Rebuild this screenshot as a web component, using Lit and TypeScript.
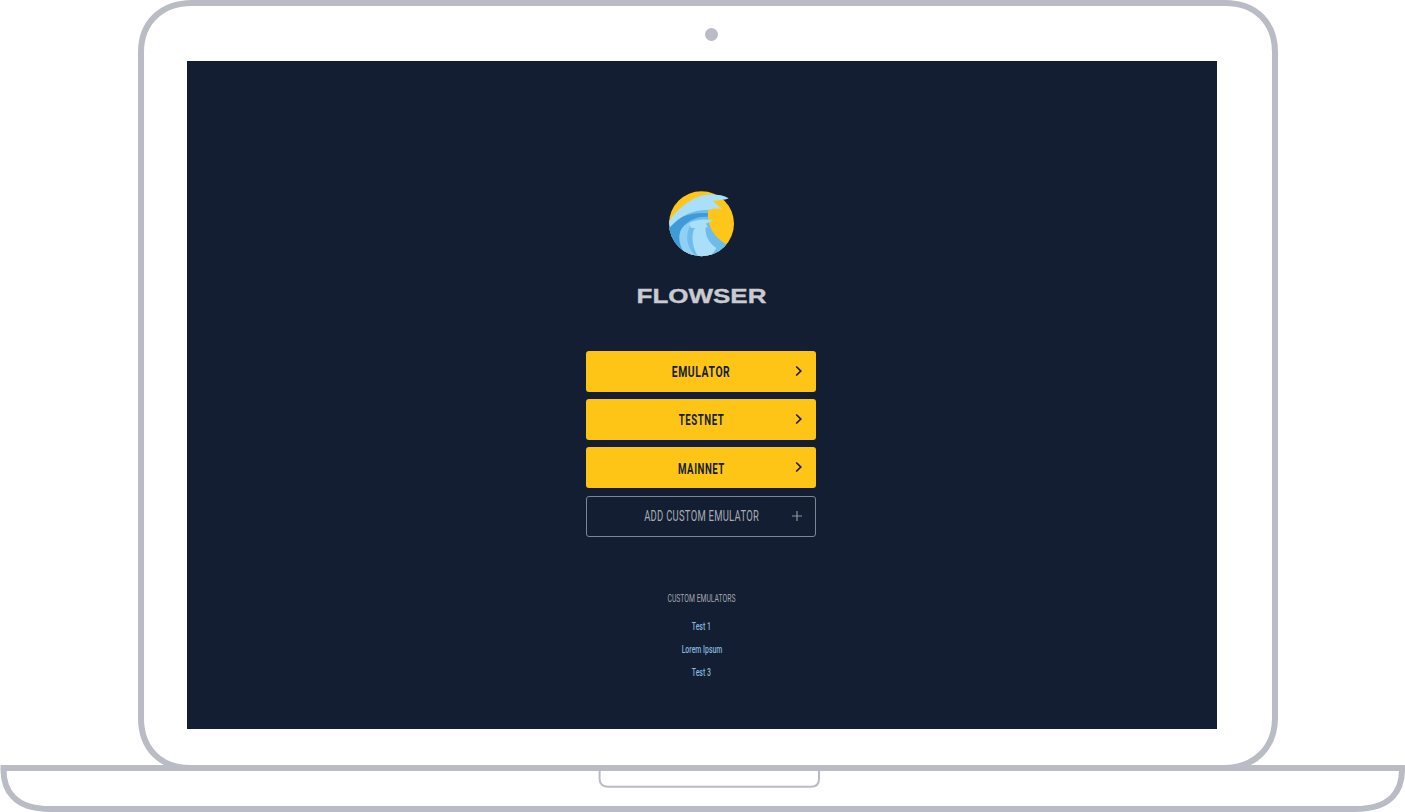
import { LitElement, html, css, svg } from "lit";
import { customElement } from "lit/decorators.js";

const FRAME = "#b9bcc4";

const frame = svg`
  <path d="M190 768 C160 768 141 748 141 718 V52 C141 22 162 3 192 3 H1225 C1255 3 1275 22 1275 52 V718 C1275 748 1254 768 1224 768" fill="none" stroke="${FRAME}" stroke-width="6"/>
  <path d="M3.5 768 H1402 C1402.5 790 1392 809 1355 809 H50 C14 809 3 790 3.5 768 Z" fill="#fff" stroke="${FRAME}" stroke-width="6"/>
  <path d="M599.6 771 V779 C599.6 784 603 786.7 608 786.7 H811 C816 786.7 819 784 819 779 V771" fill="none" stroke="${FRAME}" stroke-width="2"/>
  <circle cx="711.5" cy="34.5" r="6.5" fill="${FRAME}"/>
`;

const logo = svg`
  <svg class="logo" viewBox="0 0 240 228" width="80" height="76" aria-label="Flowser logo">
    <defs><clipPath id="disc"><circle cx="121.5" cy="113" r="97.5"/></clipPath></defs>
    <circle cx="121.5" cy="113" r="97.5" fill="#ffc61a"/>
    <g clip-path="url(#disc)">
      <path d="M20 130 C40 75 85 45 125 30 L142 70 C136 112 152 150 200 178 L200 228 L0 228 Z" fill="#6fbcec"/>
      <path d="M20 122 C50 92 95 78 141 82 L140 93 C108 90 78 105 62 128 C50 148 52 175 68 198 L20 190 Z" fill="#3f9ad8"/>
      <path d="M62 128 C72 115 85 108 98 104 C80 125 74 150 82 176 C88 193 98 205 110 214 L74 205 C56 182 50 150 62 128 Z" fill="#8fd0f4"/>
      <path d="M100 128 C110 122 125 122 134 122 C132 145 140 168 166 186 C160 198 152 206 142 214 L112 214 C94 185 90 150 100 128 Z" fill="#a9dff9"/>
    </g>
    <path d="M24 106 C44 72 85 42 112 32 C135 24 178 22 203 37 C190 44 172 42 155 45 L183 68 C165 66 150 68 140 72 C105 70 60 85 27 124 Z" fill="#a9dff9"/>
    <path d="M84 112 C100 100 130 98 157 102 L135 113 L141 124 C120 122 100 128 90 125 Z" fill="#a9dff9"/>
  </svg>
`;

const chevron = svg`<svg class="icon" viewBox="0 0 14 14" width="14" height="14"><path d="M4.2 2.5 L8.8 7 L4.2 11.5" fill="none" stroke="#131e33" stroke-width="1.7"/></svg>`;
const plus = svg`<svg class="icon plus" viewBox="0 0 14 14" width="14" height="14"><path d="M7 2 V12 M2 7 H12" fill="none" stroke="#8d939e" stroke-width="1.2"/></svg>`;

@customElement("app-root")
export class AppRoot extends LitElement {
  static styles = css`
    :host {
      display: block;
      width: 1405px;
      height: 812px;
      background: #fff;
      font-family: Roboto, "Liberation Sans", sans-serif;
      overflow: hidden;
    }
    .device {
      position: relative;
      box-sizing: border-box;
      width: 1405px;
      height: 812px;
      padding: 61px 188px 83px 187px;
    }
    .frame {
      position: absolute;
      inset: 0;
      width: 1405px;
      height: 812px;
    }
    .screen {
      position: relative;
      box-sizing: border-box;
      height: 668px;
      background: #131e33;
      display: flex;
      flex-direction: column;
      align-items: center;
      padding-top: 130px;
      padding-right: 2px;
    }
    .logo { display: block; margin: -5px 1px 0 0; }
    .brand {
      margin: 23px 0 0;
      font: 700 20px/22px "Liberation Sans", Arial, sans-serif;
      color: #c9cbd0;
      transform: translateX(0.5px) scaleX(1.3);
      -webkit-text-stroke: 0.35px #c9cbd0;
    }
    .buttons {
      margin-top: 43.5px;
      width: 230px;
      display: flex;
      flex-direction: column;
      gap: 7.4px;
    }
    .btn {
      position: relative;
      box-sizing: border-box;
      height: 41px;
      border-radius: 3px;
      display: flex;
      align-items: center;
      justify-content: center;
      background: #ffc516;
      color: #131e33;
    }
    .btn span {
      font-weight: 700;
      font-size: 14px;
      letter-spacing: 0.8px;
      transform: translate(0.5px, 1px) scaleX(0.74);
    }
    .btn span.narrow {
      transform: translate(0.5px, 1px) scaleX(0.69);
    }
    .btn.outline {
      background: transparent;
      border: 1px solid #7e8694;
      color: #a9adb5;
    }
    .btn.outline span {
      font-weight: 400;
      letter-spacing: 0.4px;
      transform: translateX(0.5px) scaleX(0.675);
      white-space: nowrap;
    }
    .icon {
      position: absolute;
      right: 10px;
      top: 13px;
    }
    .icon.plus {
      right: 11px;
      top: 12.5px;
    }
    .custom {
      margin-top: 56px;
      display: flex;
      flex-direction: column;
      align-items: center;
    }
    .custom h2 {
      margin: 0 0 16.5px;
      font-weight: 400;
      font-size: 10px;
      line-height: 12px;
      color: #a3a7b0;
      transform: translate(0.5px, -0.5px) scaleX(0.68);
      white-space: nowrap;
    }
    .custom a {
      display: block;
      font-size: 10px;
      font-weight: 500;
      line-height: 12px;
      margin-bottom: 10.7px;
      color: #85b6dc;
      transform: translateX(0.5px) scaleX(0.69);
      white-space: nowrap;
    }
  `;

  render() {
    return html`
      <div class="device">
        <svg class="frame" viewBox="0 0 1405 812">${frame}</svg>
        <main class="screen">
          ${logo}
          <h1 class="brand">FLOWSER</h1>
          <div class="buttons">
            <div class="btn"><span>EMULATOR</span>${chevron}</div>
            <div class="btn"><span class="narrow">TESTNET</span>${chevron}</div>
            <div class="btn"><span class="narrow">MAINNET</span>${chevron}</div>
            <div class="btn outline"><span>ADD CUSTOM EMULATOR</span>${plus}</div>
          </div>
          <section class="custom">
            <h2>CUSTOM EMULATORS</h2>
            <a>Test 1</a>
            <a>Lorem Ipsum</a>
            <a>Test 3</a>
          </section>
        </main>
      </div>
    `;
  }
}
